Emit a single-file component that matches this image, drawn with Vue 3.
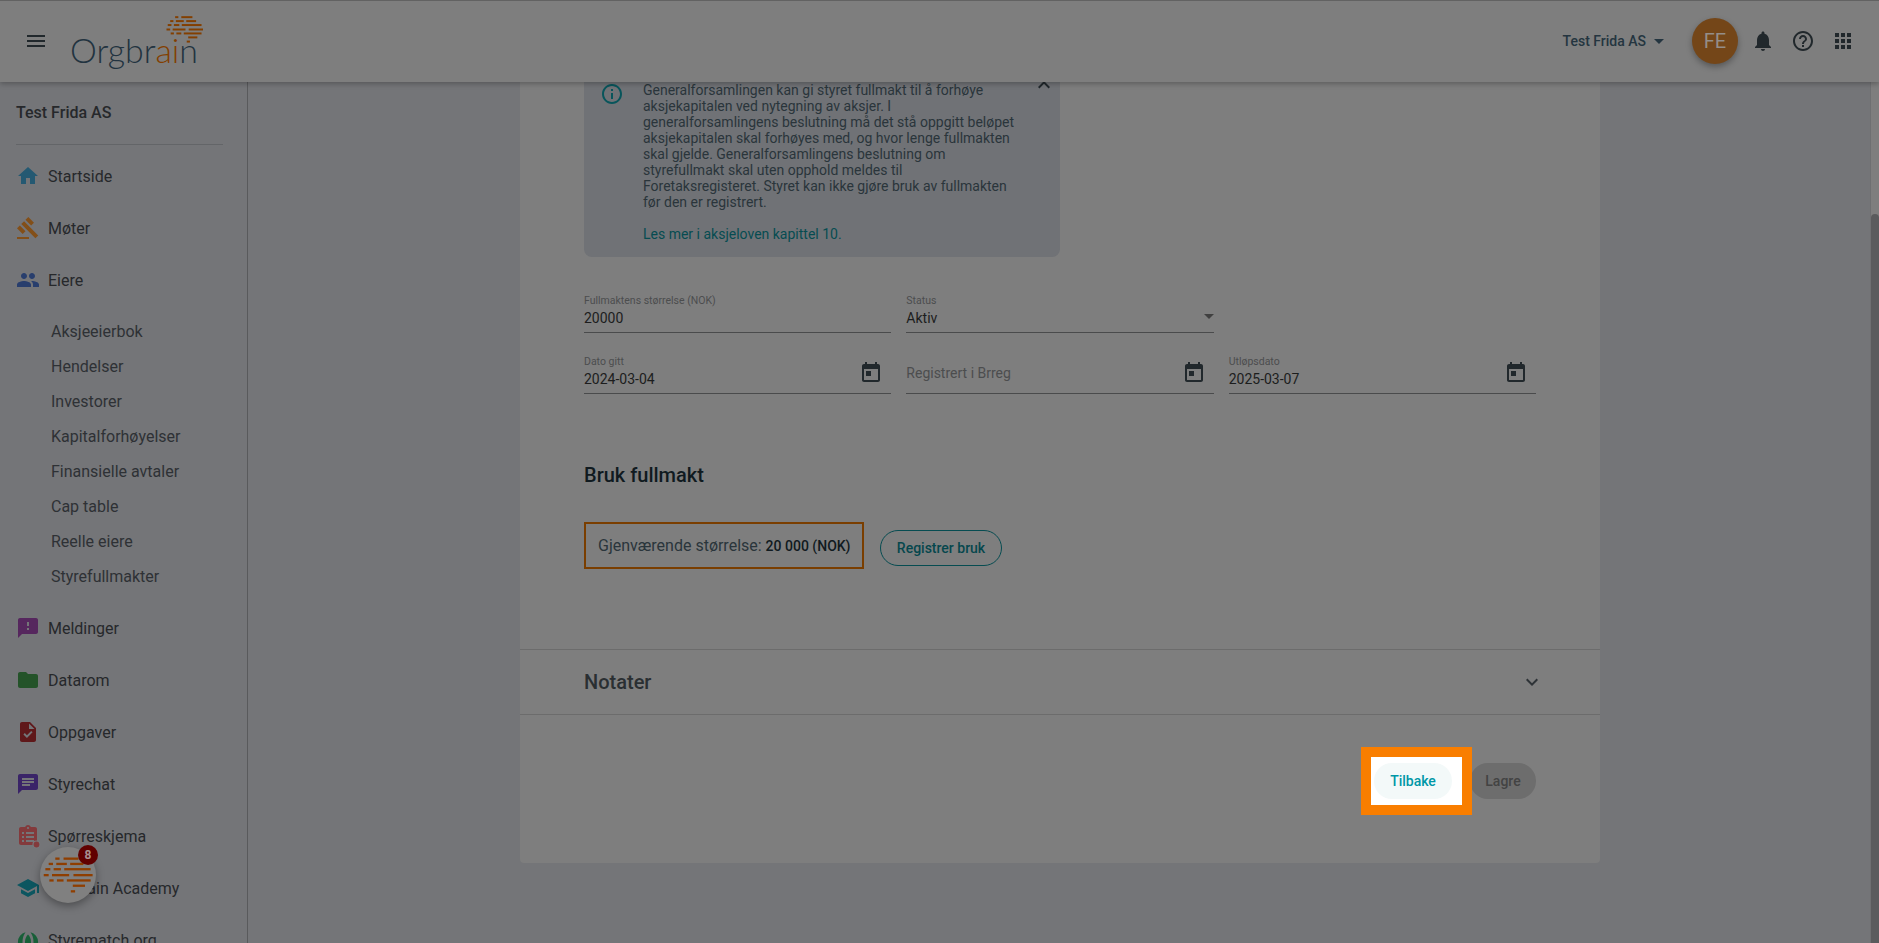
<script setup>
const icons = {
  home: 'M10 20v-6h4v6h5v-8h3L12 3 2 12h3v8z',
  gavel: 'M1 21h12v2H1zM5.245 8.07l2.83-2.827 14.14 14.142-2.828 2.828zM12.317 1l5.657 5.656-2.83 2.83-5.654-5.66zM3.825 9.485l5.657 5.657-2.828 2.828-5.657-5.657z',
  people: 'M16 11c1.66 0 2.99-1.34 2.99-3S17.66 5 16 5c-1.66 0-3 1.34-3 3s1.34 3 3 3zm-8 0c1.66 0 2.99-1.34 2.99-3S9.66 5 8 5C6.34 5 5 6.34 5 8s1.34 3 3 3zm0 2c-2.33 0-7 1.17-7 3.5V19h14v-2.5c0-2.33-4.67-3.5-7-3.5zm8 0c-.29 0-.62.02-.97.05 1.16.84 1.97 1.97 1.97 3.45V19h6v-2.5c0-2.33-4.67-3.5-7-3.5z',
  sms: 'M20 2H4c-1.1 0-1.99.9-1.99 2L2 22l4-4h14c1.1 0 2-.9 2-2V4c0-1.1-.9-2-2-2zm-7 12h-2v-2h2v2zm0-4h-2V6h2v4z',
  folder: 'M10 4H4c-1.1 0-1.99.9-1.99 2L2 18c0 1.1.9 2 2 2h16c1.1 0 2-.9 2-2V8c0-1.1-.9-2-2-2h-8l-2-2z',
  task: 'M14 2H6c-1.1 0-1.99.9-1.99 2L4 20c0 1.1.89 2 1.99 2H18c1.1 0 2-.9 2-2V8l-6-6zm-3.06 16L7.4 14.46l1.41-1.41 2.12 2.12 4.24-4.24 1.41 1.41L10.94 18zM13 9V3.5L18.5 9H13z',
  chat: 'M20 2H4c-1.1 0-1.99.9-1.99 2L2 22l4-4h14c1.1 0 2-.9 2-2V4c0-1.1-.9-2-2-2zM6 9h12v2H6V9zm8 5H6v-2h8v2zm4-6H6V6h12v2z',
  form: 'M19 3h-4.18C14.4 1.84 13.3 1 12 1c-1.3 0-2.4.84-2.82 2H5c-1.1 0-2 .9-2 2v14c0 1.1.9 2 2 2h14c1.1 0 2-.9 2-2V5c0-1.1-.9-2-2-2zm-7 0c.55 0 1 .45 1 1s-.45 1-1 1-1-.45-1-1 .45-1 1-1zM6 8h2v2H6zm4 0h8v2h-8zm-4 4h2v2H6zm4 0h8v2h-8zm-4 4h2v2H6zm4 0h8v2h-8z',
  school: 'M5 13.18v4L12 21l7-3.82v-4L12 17l-7-3.82zM12 3L1 9l11 6 9-4.91V17h2V9L12 3z',
  globe: 'M12 6.500c2 2 3 4.500 3 7.500s-1 5.500-3 7.500c-2-2-3-4.500-3-7.500s1-5.500 3-7.500zM9.500 4.300A10 10 0 0 0 9.500 23.700C7.500 21 6.500 17.500 6.500 14s1-7 3-9.700zM14.500 4.300A10 10 0 0 1 14.500 23.700c2-2.700 3-6.200 3-9.700s-1-7-3-9.700z',
  menu: 'M3 18h18v-2H3v2zm0-5h18v-2H3v2zm0-7v2h18V6H3z',
  bell: 'M12 22c1.1 0 2-.9 2-2h-4c0 1.1.89 2 2 2zm6-6v-5c0-3.07-1.64-5.64-4.5-6.32V4c0-.83-.67-1.5-1.5-1.5s-1.5.67-1.5 1.5v.68C7.63 5.36 6 7.92 6 11v5l-2 2v1h16v-1l-2-2z',
  help: 'M11 18h2v-2h-2v2zm1-16C6.48 2 2 6.48 2 12s4.48 10 10 10 10-4.48 10-10S17.52 2 12 2zm0 18c-4.41 0-8-3.59-8-8s3.59-8 8-8 8 3.59 8 8-3.59 8-8 8zm0-14c-2.21 0-4 1.79-4 4h2c0-1.1.9-2 2-2s2 .9 2 2c0 2-3 1.75-3 5h2c0-2.25 3-2.5 3-5 0-2.21-1.79-4-4-4z',
  apps: 'M4 8h4V4H4v4zm6 12h4v-4h-4v4zm-6 0h4v-4H4v4zm0-6h4v-4H4v4zm6 0h4v-4h-4v4zm6-10v4h4V4h-4zm-6 4h4V4h-4v4zm6 6h4v-4h-4v4zm0 6h4v-4h-4v4z',
  today: 'M19 3h-1V1h-2v2H8V1H6v2H5c-1.11 0-1.99.9-1.99 2L3 19c0 1.1.89 2 2 2h14c1.1 0 2-.9 2-2V5c0-1.1-.9-2-2-2zm0 16H5V8h14v11zM7 10h5v5H7z',
  info: 'M11 7h2v2h-2zm0 4h2v6h-2zm1-9C6.48 2 2 6.48 2 12s4.48 10 10 10 10-4.48 10-10S17.52 2 12 2zm0 18c-4.41 0-8-3.59-8-8s3.59-8 8-8 8 3.59 8 8-3.59 8-8 8z',
  down: 'M7.41 8.59L12 13.17l4.59-4.58L18 10l-6 6-6-6 1.41-1.41z',
  up: 'M7.41 15.41L12 10.83l4.59 4.58L18 14l-6-6-6 6z',
  drop: 'M7 10l5 5 5-5z'
}

const topItems = [
  { label: 'Startside', icon: 'home', color: '#245972' },
  { label: 'Møter', icon: 'gavel', color: '#834f18' },
  { label: 'Eiere', icon: 'people', color: '#283e6d' }
]
const subItems = ['Aksjeeierbok', 'Hendelser', 'Investorer', 'Kapitalforhøyelser', 'Finansielle avtaler', 'Cap table', 'Reelle eiere', 'Styrefullmakter']
const bottomItems = [
  { label: 'Meldinger', icon: 'sms', color: '#56275e' },
  { label: 'Datarom', icon: 'folder', color: '#245329' },
  { label: 'Oppgaver', icon: 'task', color: '#5f181a' },
  { label: 'Styrechat', icon: 'chat', color: '#3a2468' },
  { label: 'Spørreskjema', icon: 'form', color: '#833a3c' },
  { label: 'Orgbrain Academy', icon: 'school', color: '#0c5660' },
  { label: 'Styrematch.org', icon: 'globe', color: '#185f38' }
]

// brain mark: dashes as [x1, x2, y] in a shared 150 x 110 grid
const dashes = [
  [35, 48, 5], [60, 105, 5],
  [15, 28, 21], [38, 70, 21], [80, 120, 21],
  [5, 20, 37], [30, 52, 37], [62, 142, 37],
  [0, 15, 55], [25, 77, 55], [90, 148, 55],
  [17, 30, 71], [40, 60, 71], [70, 142, 71],
  [88, 125, 87],
  [82, 95, 104]
]
</script>

<template>
  <div class="app">
    <header class="topbar">
      <svg class="ico menu" viewBox="0 0 24 24"><path :d="icons.menu" /></svg>
      <div class="logo">
        <span class="logo-text">Orgbr<span class="logo-ai">ai</span>n</span>
        <svg class="logo-mark" viewBox="-2 -3 154 112">
          <line v-for="(d, i) in dashes" :key="i" :x1="d[0]" :x2="d[1]" :y1="d[2]" :y2="d[2]" />
        </svg>
      </div>
      <div class="top-right">
        <span class="company">Test Frida AS</span>
        <svg class="caret" viewBox="0 0 24 24"><path :d="icons.drop" /></svg>
        <div class="avatar">FE</div>
        <svg class="ico bell" viewBox="0 0 24 24"><path :d="icons.bell" /></svg>
        <svg class="ico help" viewBox="0 0 24 24"><path :d="icons.help" /></svg>
        <svg class="ico apps" viewBox="0 0 24 24"><path :d="icons.apps" /></svg>
      </div>
    </header>

    <div class="body">
      <aside class="sidebar">
        <div class="org">Test Frida AS</div>
        <div class="divider"></div>
        <div v-for="it in topItems" :key="it.label" class="nav">
          <svg class="nav-ico" viewBox="0 0 24 24" :style="{ fill: it.color }"><path :d="icons[it.icon]" /></svg>
          <span>{{ it.label }}</span>
        </div>
        <div class="subs">
          <div v-for="s in subItems" :key="s" class="sub">{{ s }}</div>
        </div>
        <div v-for="it in bottomItems" :key="it.label" class="nav">
          <svg class="nav-ico" viewBox="0 0 24 24" :style="{ fill: it.color }">
            <path fill-rule="evenodd" :d="icons[it.icon]" />
            <circle v-if="it.icon === 'form'" cx="20.5" cy="20.5" r="3.5" stroke="#77787b" stroke-width="1.2" />
          </svg>
          <span>{{ it.label }}</span>
        </div>
      </aside>

      <main class="main">
        <section class="card">
          <div class="content">
            <div class="alert">
              <svg class="alert-ico" viewBox="0 0 24 24"><path :d="icons.info" /></svg>
              <div class="alert-text">
                <p>Generalforsamlingen kan gi styret fullmakt til å forhøye aksjekapitalen ved nytegning av aksjer. I generalforsamlingens beslutning må det stå oppgitt beløpet aksjekapitalen skal forhøyes med, og hvor lenge fullmakten skal gjelde. Generalforsamlingens beslutning om styrefullmakt skal uten opphold meldes til Foretaksregisteret. Styret kan ikke gjøre bruk av fullmakten før den er registrert.</p>
                <p class="alert-link">Les mer i aksjeloven kapittel 10.</p>
              </div>
              <svg class="alert-close" viewBox="0 0 24 24"><path :d="icons.up" /></svg>
            </div>

            <div class="fields">
              <div class="field">
                <label>Fullmaktens størrelse (NOK)</label>
                <div class="value">20000</div>
              </div>
              <div class="field">
                <label>Status</label>
                <div class="value">Aktiv</div>
                <svg class="field-drop" viewBox="0 0 24 24"><path :d="icons.drop" /></svg>
              </div>
              <div></div>
              <div class="field">
                <label>Dato gitt</label>
                <div class="value">2024-03-04</div>
                <svg class="field-cal" viewBox="0 0 24 24"><path :d="icons.today" /></svg>
              </div>
              <div class="field empty">
                <div class="placeholder">Registrert i Brreg</div>
                <svg class="field-cal" viewBox="0 0 24 24"><path :d="icons.today" /></svg>
              </div>
              <div class="field">
                <label>Utløpsdato</label>
                <div class="value">2025-03-07</div>
                <svg class="field-cal" viewBox="0 0 24 24"><path :d="icons.today" /></svg>
              </div>
            </div>

            <h2 class="use-title">Bruk fullmakt</h2>
            <div class="use-row">
              <div class="remaining">Gjenværende størrelse:&nbsp;<b>20 000 (NOK)</b></div>
              <button class="outline">Registrer bruk</button>
            </div>
          </div>

          <div class="notes">
            <span>Notater</span>
            <svg viewBox="0 0 24 24"><path :d="icons.down" /></svg>
          </div>

          <div class="footer">
            <div class="spot"><button class="back">Tilbake</button></div>
            <button class="save">Lagre</button>
          </div>
        </section>
      </main>
      <div class="scrollbar"><div class="thumb"></div></div>
    </div>

    <div class="bubble">
      <svg viewBox="-2 -3 154 112">
        <line v-for="(d, i) in dashes" :key="i" :x1="d[0]" :x2="d[1]" :y1="d[2]" :y2="d[2]" />
      </svg>
      <span class="badge">8</span>
    </div>
  </div>
</template>

<style>
html, body { margin: 0; background: #747578; }
</style>

<style scoped>
.app {
  position: relative;
  height: 943px;
  overflow: hidden;
  display: flex;
  flex-direction: column;
  font-family: Roboto, "Liberation Sans", sans-serif;
  background: #747578;
  color: #26282b;
}

/* top bar */
.topbar {
  position: relative;
  z-index: 5;
  flex: 0 0 82px;
  box-sizing: border-box;
  display: flex;
  align-items: center;
  padding: 0 0 1px 24px;
  background: #7e7e7e;
  border-top: 1px solid #626262;
  box-shadow: 0 2px 5px rgba(0, 0, 0, .25);
}
.ico { width: 24px; height: 24px; fill: #21282c; flex: none; }
.logo { position: relative; margin-left: 22px; width: 137px; height: 60px; }
.logo-text {
  position: absolute;
  left: 0;
  bottom: 2px;
  font-family: Lato, sans-serif;
  font-weight: 300;
  font-size: 33.9px;
  line-height: 38px;
  color: #223340;
}
.logo-ai { color: #833f00; }
.logo-mark { position: absolute; left: 96px; top: 4px; width: 38px; height: 28px; }
.logo-mark line { stroke: #833f00; stroke-width: 8; }
.top-right { margin-left: auto; display: flex; align-items: center; padding-right: 24px; }
.company { font-size: 14px; font-weight: 500; color: #243540; }
.caret { width: 24px; height: 24px; fill: #243540; margin-left: 1px; }
.avatar {
  width: 46px;
  height: 46px;
  margin: 0 13px 0 21px;
  border-radius: 50%;
  background: #744618;
  color: #948e88;
  font-size: 20px;
  display: flex;
  align-items: center;
  justify-content: center;
  box-shadow: 0 3px 6px rgba(0, 0, 0, .3);
}
.help, .apps { margin-left: 16px; }

/* layout */
.body { flex: 1; display: flex; min-height: 0; }
.sidebar {
  flex: 0 0 248px;
  box-sizing: border-box;
  border-right: 1px solid #595a5c;
  padding: 0 24px 0 16px;
  overflow: hidden;
}
.org { font-size: 16px; font-weight: 500; line-height: 24px; margin-top: 19px; }
.divider { height: 1px; background: #636568; margin-top: 19px; margin-bottom: 5px; }
.nav { display: flex; align-items: center; height: 52px; font-size: 16px; gap: 8px; }
.nav-ico { width: 24px; height: 24px; flex: none; overflow: visible; }
.subs { padding: 8px 0 8px 35px; }
.sub { height: 35px; line-height: 35px; font-size: 16px; color: #2e3135; }

.main { flex: 1; min-width: 0; display: flex; overflow: hidden; padding-left: 272px; box-sizing: border-box; }
.card {
  flex: 0 0 1080px;
  height: 781px;
  background: #7e7e7e;
  border-radius: 0 0 4px 4px;
}
.content { padding: 0 64px; height: 567px; box-sizing: border-box; }
.scrollbar { flex: 0 0 8px; position: relative; background: #7e7e7e; border-left: 1px solid #6e6f71; }
.thumb { position: absolute; top: 132px; bottom: 0; left: 0; right: 0; background: #5a5b5d; border-radius: 4px 4px 0 0; }

/* alert */
.alert {
  position: relative;
  box-sizing: border-box;
  height: 175px;
  width: 476px;
  padding: 0 0 15px 59px;
  background: #707276;
  border-radius: 0 0 8px 8px;
}
.alert-ico { position: absolute; left: 16px; top: 0; width: 24px; height: 24px; fill: #08555b; }
.alert-close { position: absolute; right: 4px; top: -9px; width: 24px; height: 24px; fill: #21282c; }
.alert-text { width: 375px; font-size: 14px; line-height: 16px; color: #2a353b; }
.alert-text p { margin: 0; }
.alert-text .alert-link { margin-top: 16px; color: #064c51; }

/* form */
.fields {
  display: grid;
  grid-template-columns: repeat(3, 1fr);
  column-gap: 15px;
  row-gap: 15px;
  margin-top: 30px;
}
.field {
  position: relative;
  height: 46px;
  box-sizing: border-box;
  border-bottom: 1px solid #4a4b4c;
  padding-top: 7px;
}
.field label { display: block; font-size: 10.5px; line-height: 14px; color: #4c4d4e; }
.value { font-size: 14px; line-height: 20px; color: #1c1d1d; }
.placeholder { font-size: 14px; line-height: 20px; margin-top: 8px; color: #4c4d4e; }
.field-cal { position: absolute; right: 8px; top: 13px; width: 24px; height: 24px; fill: #21282c; }
.field-drop { position: absolute; right: -7px; top: 17px; width: 24px; height: 24px; fill: #404040; }

.use-title { margin: 67px 0 0; font-size: 20px; font-weight: 500; line-height: 28px; color: #101a20; }
.use-row { display: flex; align-items: center; gap: 16px; margin-top: 33px; }
.remaining {
  box-sizing: border-box;
  width: 280px;
  height: 47px;
  display: flex;
  align-items: center;
  padding-left: 12px;
  border: 2px solid #7a3e00;
  font-size: 16px;
  color: #2a353b;
  white-space: nowrap;
}
.remaining b { font-size: 14px; font-weight: 500; color: #101a20; }
.outline {
  position: relative;
  top: 2px;
  width: 122px;
  height: 36px;
  padding: 0;
  border: 1px solid #064c51;
  border-radius: 18px;
  background: transparent;
  color: #06474d;
  font: 500 14px Roboto, sans-serif;
}

.notes {
  box-sizing: border-box;
  height: 66px;
  display: flex;
  align-items: center;
  justify-content: space-between;
  padding: 0 56px 0 64px;
  border-top: 1px solid #6c6c6c;
  border-bottom: 1px solid #6c6c6c;
  font-size: 20px;
  font-weight: 500;
  color: #2a2f32;
}
.notes svg { width: 24px; height: 24px; fill: #2e3337; }

.footer {
  display: flex;
  justify-content: flex-end;
  align-items: center;
  gap: 18px;
  padding: 48px 64px 0 0;
}
.spot { position: relative; z-index: 8; }
.spot::before {
  content: "";
  position: absolute;
  z-index: -1;
  left: -13px;
  top: -16px;
  width: 111px;
  height: 68px;
  box-sizing: border-box;
  border: 10px solid #f97e00;
  background: #fff;
}
.back, .save {
  height: 36px;
  padding: 0;
  border: 0;
  border-radius: 18px;
  font: 500 14px Roboto, sans-serif;
  display: block;
}
.back { width: 78px; background: #f3f9f9; color: #0097a7; }
.save { width: 66px; background: #6d6d6d; color: #434343; }

/* help bubble */
.bubble {
  position: absolute;
  z-index: 6;
  left: 40px;
  top: 847px;
  width: 56px;
  height: 56px;
  border-radius: 50%;
  background: #808080;
  box-shadow: 0 3px 8px rgba(0, 0, 0, .35);
}
.bubble svg { position: absolute; left: 3px; top: 9px; width: 51px; height: 37px; }
.bubble line { stroke: #8f3e00; stroke-width: 7; }
.badge {
  position: absolute;
  left: 38px;
  top: -2px;
  width: 20px;
  height: 20px;
  border-radius: 50%;
  background: #610000;
  color: #a89090;
  font-size: 12px;
  font-weight: 700;
  line-height: 20px;
  text-align: center;
}
</style>
